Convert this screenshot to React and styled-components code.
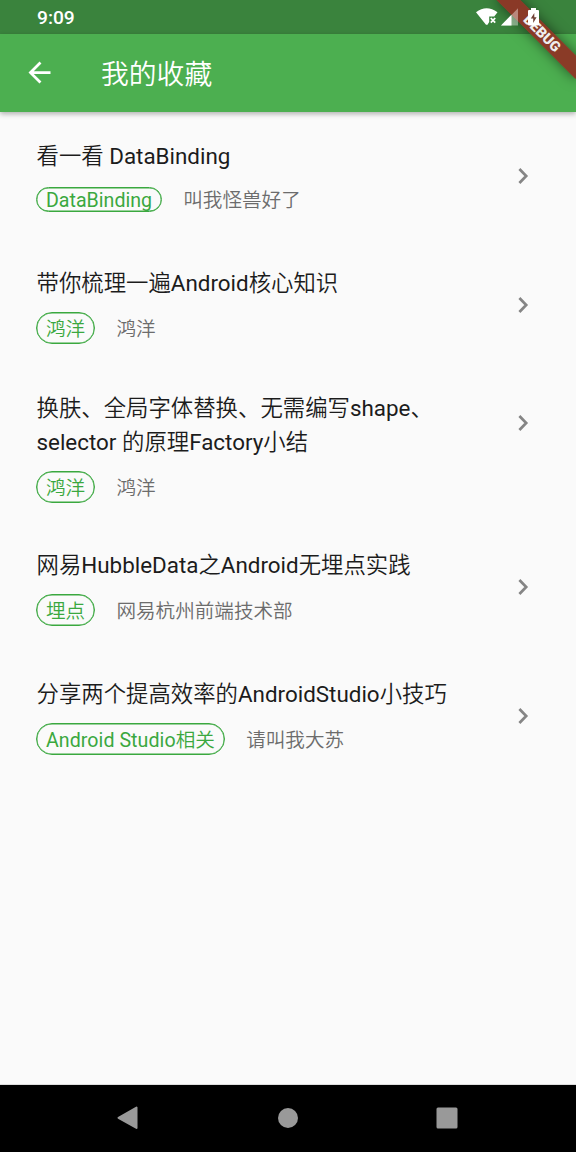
import React from 'react';
import styled, { createGlobalStyle } from 'styled-components';

const Global = createGlobalStyle`
  * { box-sizing: border-box; }
  body { margin: 0; background: #000; }
`;

const Screen = styled.div`
  position: relative;
  width: 576px;
  height: 1152px;
  overflow: hidden;
  display: flex;
  flex-direction: column;
  background: #fafafa;
  font-family: Roboto, 'Noto Sans CJK SC', sans-serif;
`;

const StatusBar = styled.header`
  flex: none;
  height: 34px;
  padding: 0 36px 0 37px;
  display: flex;
  justify-content: space-between;
  background: #3a833d;
  color: #fff;
`;

const Clock = styled.span`
  font-size: 19.2px;
  font-weight: 480;
  line-height: 35px;
`;

const StatusIcons = styled.svg`
  position: relative;
  z-index: 3;
  display: block;
`;

const AppBar = styled.div`
  position: relative;
  flex: none;
  height: 78px;
  padding: 0 0 1px 23px;
  display: flex;
  align-items: center;
  background: #4caf50;
  color: #fff;
  box-shadow: 0 2px 5px rgba(0, 0, 0, 0.3);
`;

const AppTitle = styled.h1`
  margin: 5px 0 0 45px;
  font-size: 27.8px;
  font-weight: 350;
  line-height: 40px;
`;

const BannerClip = styled.div`
  position: absolute;
  z-index: 2;
  top: 0;
  right: 0;
  width: 130px;
  height: 130px;
  overflow: hidden;
`;

const Banner = styled.div`
  position: absolute;
  top: 25.3px;
  right: -22.3px;
  width: 112px;
  height: 16.8px;
  transform: rotate(45deg);
  background: rgba(140, 55, 38, 0.97);
  box-shadow: 0 0 13px rgba(0, 0, 0, 0.5);
  color: #eee;
  font-size: 14.3px;
  font-weight: 900;
  line-height: 17px;
  text-align: center;
`;

const List = styled.main`
  flex: 1;
  border-bottom: 1px solid #ddd;
`;

const Row = styled.article`
  height: ${(p) => p.$height}px;
  padding: 27px 41px 0 36.5px;
  display: flex;
  justify-content: space-between;
  align-items: flex-start;
`;

const Title = styled.h2`
  margin: 0;
  font-size: 22.4px;
  font-weight: 370;
  line-height: 34px;
  color: #1c1c1c;
  white-space: pre-line;
`;

const Han = styled.span`
  font-weight: 350;
`;

const Meta = styled.div`
  margin-top: ${(p) => p.$gap}px;
  display: flex;
  align-items: center;
  gap: 21.2px;
  font-size: 19.6px;
  font-weight: 370;
`;

const Tag = styled.span`
  height: ${(p) => p.$height}px;
  margin-left: -0.5px;
  padding: 0 9px;
  display: flex;
  align-items: center;
  border: 1px solid #3aa83f;
  box-shadow: inset 0 0 0 0.4px #3aa83f;
  border-radius: 17px;
  color: #3aa83f;
`;

const TagText = styled.span`
  padding-top: ${(p) => p.$shift}px;
  line-height: 25px;
  letter-spacing: ${(p) => p.$tracking || 0}px;
  white-space: pre;
`;

const Author = styled.span`
  padding-top: 2px;
  line-height: 25px;
  color: #6c6c6c;
  font-weight: 350;
`;

const Chevron = styled.svg`
  flex: none;
  display: block;
  margin-top: ${(p) => p.$offset}px;
`;

const NavBar = styled.nav`
  flex: none;
  height: 67px;
  background: #000;
  display: flex;
  justify-content: space-between;
  align-items: center;
  padding: 0 118px 1px 117px;
`;

const items = [
  { title: '看一看 DataBinding', tag: 'DataBinding', author: '叫我怪兽好了', height: 127, gap: 13, tagHeight: 25, textShift: 2, arrow: 20.4 },
  { title: '带你梳理一遍Android核心知识', tag: '鸿洋', author: '鸿洋', height: 125, gap: 12.4, tagHeight: 32, textShift: 2, arrow: 22.3 },
  { title: '换肤、全局字体替换、无需编写shape、\nselector 的原理Factory小结', tag: '鸿洋', author: '鸿洋', height: 157, gap: 12, tagHeight: 32, textShift: 2, arrow: 15 },
  { title: '网易HubbleData之Android无埋点实践', tag: '埋点', author: '网易杭州前端技术部', height: 129, gap: 12.4, tagHeight: 32, textShift: 2, arrow: 22 },
  { title: '分享两个提高效率的AndroidStudio小技巧', tag: 'Android Studio相关', author: '请叫我大苏', height: 129, gap: 12, tagHeight: 32, textShift: 2, tracking: 0.06, arrow: 21.6 },
];

const mixed = (text) =>
  text.split(/([\u3000-\u9fff]+)/).filter(Boolean).map((part, i) =>
    /[\u3000-\u9fff]/.test(part) ? <Han key={i}>{part}</Han> : part
  );

export default function App() {
  return (
    <Screen>
      <Global />
      <StatusBar>
        <Clock>9:09</Clock>
        <StatusIcons width="66" height="34" viewBox="474 0 66 34">
          <path d="M476 12.3 Q486.5 4.3 497.5 12.3 L494.2 16.5 H489.2 V22 L487.5 24.7 H486 Z" fill="#fff" />
          <path d="M490.8 18 L495.2 22.6 M495.2 18 L490.8 22.6" stroke="#fff" strokeWidth="1.8" />
          <path d="M518 8.3 V25.6 H501 Z" fill="#fff" opacity=".4" />
          <path d="M511.5 14.7 V25.6 H501 Z" fill="#fff" />
          <path d="M531 8 H536 V10 H538 Q539 10 539 11 V24.6 Q539 25.6 538 25.6 H529 Q528 25.6 528 24.6 V11 Q528 10 529 10 H531 Z" fill="#fff" />
          <path d="M534.3 13 L530.8 18.4 H533.2 V23 L536.6 17.2 H534.3 Z" fill="#6f4135" />
        </StatusIcons>
      </StatusBar>
      <AppBar>
        <svg width="33" height="33" viewBox="0 0 24 24" fill="#fff">
          <path d="M20 11H7.83l5.59-5.59L12 4l-8 8 8 8 1.41-1.41L7.83 13H20v-2z" />
        </svg>
        <AppTitle>我的收藏</AppTitle>
      </AppBar>
      <BannerClip>
        <Banner>DEBUG</Banner>
      </BannerClip>
      <List>
        {items.map((it) => (
          <Row key={it.title} $height={it.height}>
            <div>
              <Title>{mixed(it.title)}</Title>
              <Meta $gap={it.gap}>
                <Tag $height={it.tagHeight}>
                  <TagText $shift={it.textShift} $tracking={it.tracking}>{mixed(it.tag)}</TagText>
                </Tag>
                <Author>{it.author}</Author>
              </Meta>
            </div>
            <Chevron $offset={it.arrow} width="24" height="34" viewBox="0 0 24 34">
              <path d="M8.4 10 L15.2 17 L8.4 24" fill="none" stroke="#858585" strokeWidth="2.7" />
            </Chevron>
          </Row>
        ))}
      </List>
      <NavBar>
        <svg width="22" height="24" viewBox="0 0 22 24">
          <path d="M19.5 1.6 V22 L1.5 11.8 Z" fill="#999" stroke="#999" strokeWidth="2" strokeLinejoin="round" />
        </svg>
        <svg width="20" height="20" viewBox="0 0 20 20">
          <circle cx="10" cy="10" r="10" fill="#999" />
        </svg>
        <svg width="22" height="22" viewBox="0 0 22 22">
          <rect x=".5" y=".5" width="21" height="21" rx="1.5" fill="#999" />
        </svg>
      </NavBar>
    </Screen>
  );
}
